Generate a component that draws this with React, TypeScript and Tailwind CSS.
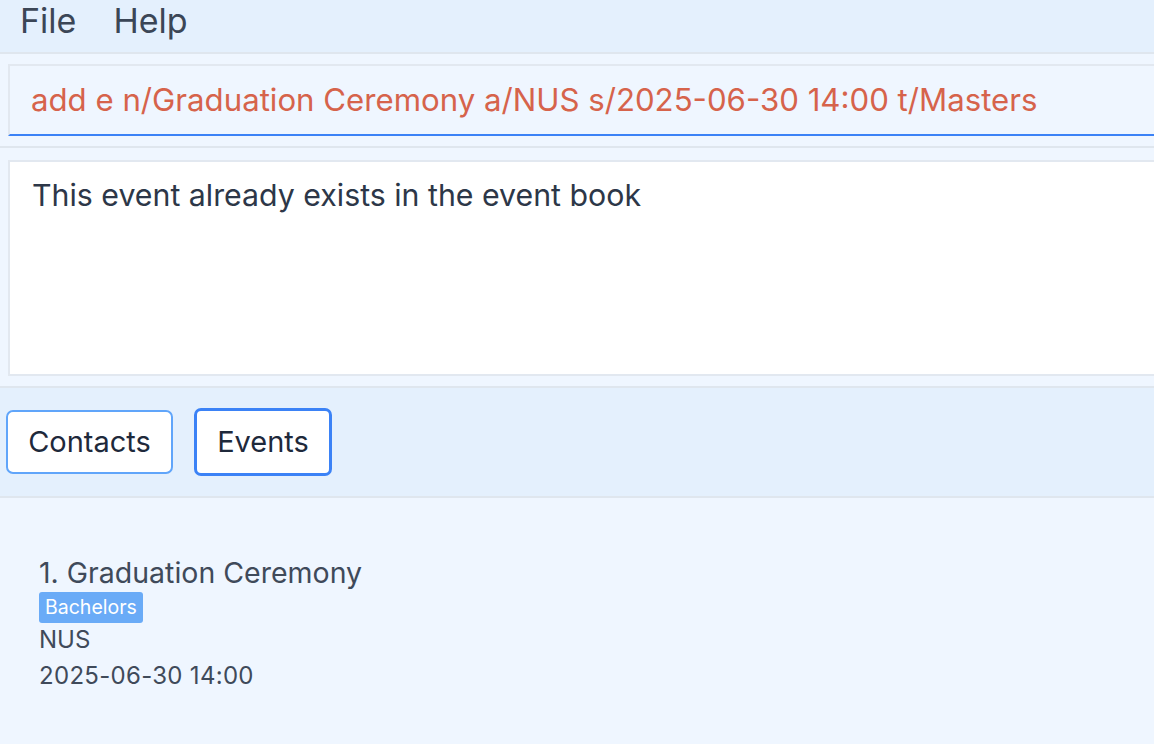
export default function App() {
  return (
    <div className="w-[1154px] h-[744px] overflow-hidden bg-[#eff6ff] text-[#334155] font-['Inter',sans-serif] flex flex-col">
      {/* menu bar */}
      <div className="h-[54px] shrink-0 bg-[#e4f0fd] border-b-2 border-[#dfe6ee] flex items-start gap-[37px] px-[20px] text-[34px] leading-[42px] text-[#3b4656]">
        <span>File</span>
        <span>Help</span>
      </div>

      {/* command box */}
      <div className="h-[94px] shrink-0 border-b-2 border-[#dfe6ee] pl-[8px] pt-[10px]">
        <div className="h-[72px] bg-[#eff6ff] border-2 border-r-0 border-[#e2e8f0] border-b-[#3b82f6] flex items-center pl-[21px] text-[31.2px] text-[#d6634b]">
          add e n/Graduation Ceremony a/NUS s/2025-06-30 14:00 t/Masters
        </div>
      </div>

      {/* result box */}
      <div className="h-[240px] shrink-0 border-b-2 border-[#dfe6ee] pl-[8px] pt-[12px]">
        <div className="h-[216px] bg-white border-2 border-r-0 border-[#e2e8f0] pl-[22px] pt-[15px] text-[30.3px] leading-[36px] text-[#2d3748]">
          This event already exists in the event book
        </div>
      </div>

      {/* tabs */}
      <div className="h-[110px] shrink-0 bg-[#e4f0fd] border-b-2 border-[#dfe6ee] flex items-center gap-[21px] pl-[6px]">
        <button className="h-[64px] w-[167px] bg-white border-2 border-[#60a5fa] rounded-[7px] text-[29px] text-[#1e293b]">
          Contacts
        </button>
        <button className="h-[68px] w-[138px] bg-white border-[3px] border-[#3b82f6] rounded-[7px] text-[29px] text-[#1e293b]">
          Events
        </button>
      </div>

      {/* event list */}
      <div className="flex-1 pl-[39px] pt-[58px] flex flex-col items-start text-[#3f4a5a]">
        <div className="text-[28.5px] leading-[34px]">1. Graduation Ceremony</div>
        <span className="mt-[2px] bg-[#6aabf7] text-white text-[19.5px] leading-[31px] px-[6px] rounded-[3px]">
          Bachelors
        </span>
        <div className="mt-[2px] text-[24px] leading-[30px]">NUS</div>
        <div className="mt-[6px] text-[24px] leading-[30px] tracking-[0.3px]">2025-06-30 14:00</div>
      </div>
    </div>
  );
}
